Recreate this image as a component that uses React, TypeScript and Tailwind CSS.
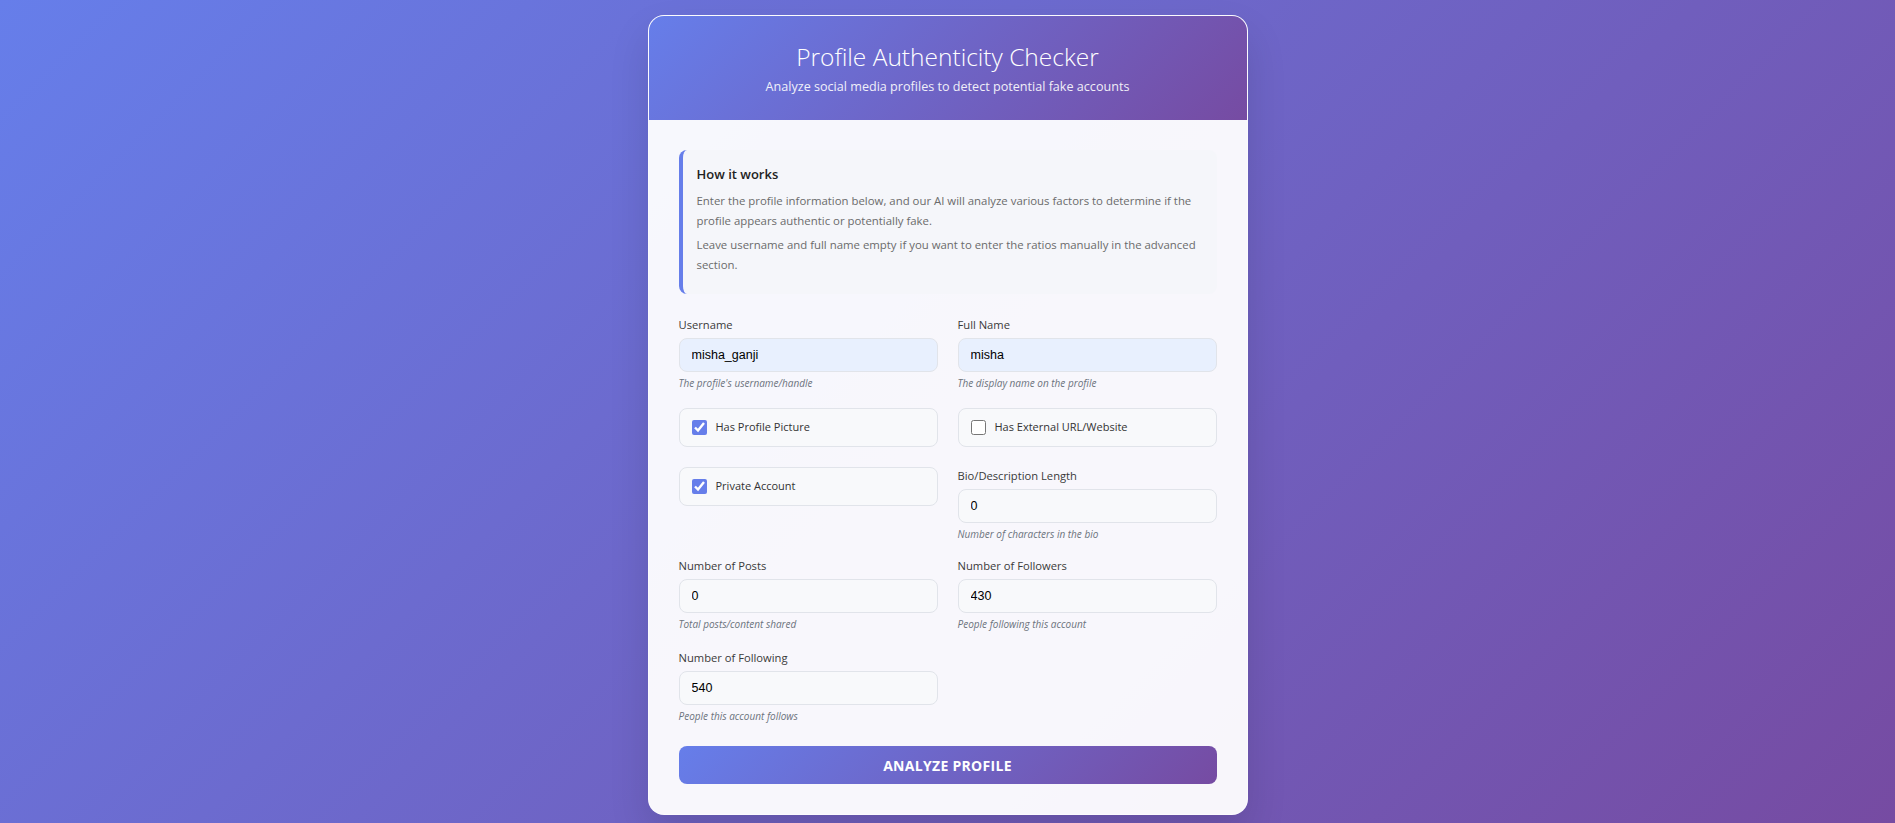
import { useState } from 'react'

const sans = "font-['Open_Sans',sans-serif]"

function Field({ label, value, help, autofill }: { label: string; value: string; help?: string; autofill?: boolean }) {
  return (
    <div className="flex flex-col">
      <label className="text-[11.2px] leading-[18px] text-[#3a3a3a] mb-1">{label}</label>
      <input
        defaultValue={value}
        className={`h-[34px] w-full rounded-lg border border-[#e1e4ea] px-3 text-[12.5px] text-black outline-none font-['Liberation_Sans',Arial,sans-serif] ${
          autofill ? 'bg-[#e8f0fe]' : 'bg-[#f8f9fb]'
        }`}
      />
      {help && <p className="mt-1 text-[10px] leading-[15px] italic text-[#6c737d]">{help}</p>}
    </div>
  )
}

function Check({ label, checked }: { label: string; checked: boolean }) {
  const [on, setOn] = useState(checked)
  return (
    <label className="flex h-[39px] items-center gap-[9px] rounded-lg border border-[#e1e4ea] bg-[#f8f9fb] px-3">
      <input
        type="checkbox"
        checked={on}
        onChange={() => setOn(!on)}
        className="m-0 h-[15px] w-[15px] accent-[#667eea]"
      />
      <span className="text-[11px] text-[#333]">{label}</span>
    </label>
  )
}

export default function App() {
  return (
    <div className={`min-h-screen bg-[linear-gradient(135deg,#667eea_0%,#764ba2_100%)] pt-[15px] pb-[9px] ${sans}`}>
      <div className="mx-auto w-[600px] overflow-hidden rounded-2xl border border-white/50 bg-white/95 shadow-[0_20px_40px_rgba(0,0,0,0.12)]">
        <div className="bg-[linear-gradient(135deg,#667eea_0%,#764ba2_100%)] pt-[26px] pb-[23px] text-center text-white">
          <h1 className="text-[24.5px] font-light leading-[30px]">Profile Authenticity Checker</h1>
          <p className="mt-[5px] text-[12.6px] leading-[20px] opacity-90">
            Analyze social media profiles to detect potential fake accounts
          </p>
        </div>

        <div className="px-[30px] pt-[30px] pb-[30px]">
          <div className="rounded-lg border-l-4 border-[#667eea] bg-[#f5f6fa] pl-[14px] pr-[15px] pt-[16px] pb-[15px]">
            <h3 className="text-[13px] font-semibold leading-[17px] text-[#222]">How it works</h3>
            <p className="mt-2 text-[11.4px] leading-[19.5px] text-[#6b6b6b]">
              Enter the profile information below, and our AI will analyze various factors to determine if the
              profile appears authentic or potentially fake.
            </p>
            <p className="mt-[5px] mb-[5px] text-[11.4px] leading-[19.5px] text-[#6b6b6b]">
              Leave username and full name empty if you want to enter the ratios manually in the advanced section.
            </p>
          </div>

          <div className="mt-[22px] grid grid-cols-2 gap-x-5">
            <Field label="Username" value="misha_ganji" help="The profile's username/handle" autofill />
            <Field label="Full Name" value="misha" help="The display name on the profile" autofill />
          </div>

          <div className="mt-[17px] grid grid-cols-2 gap-x-5">
            <Check label="Has Profile Picture" checked />
            <Check label="Has External URL/Website" checked={false} />
          </div>

          <div className="mt-[20px] grid grid-cols-2 items-start gap-x-5">
            <Check label="Private Account" checked />
            <Field label="Bio/Description Length" value="0" help="Number of characters in the bio" />
          </div>

          <div className="mt-[15px] grid grid-cols-2 gap-x-5">
            <Field label="Number of Posts" value="0" help="Total posts/content shared" />
            <Field label="Number of Followers" value="430" help="People following this account" />
          </div>

          <div className="mt-[17px] grid grid-cols-2 gap-x-5">
            <Field label="Number of Following" value="540" help="People this account follows" />
          </div>

          <button className="mt-[22px] h-[38px] w-full rounded-lg bg-[linear-gradient(135deg,#667eea_0%,#764ba2_100%)] text-[14px] font-bold uppercase tracking-[0.3px] text-white">
            Analyze Profile
          </button>
        </div>
      </div>
    </div>
  )
}
